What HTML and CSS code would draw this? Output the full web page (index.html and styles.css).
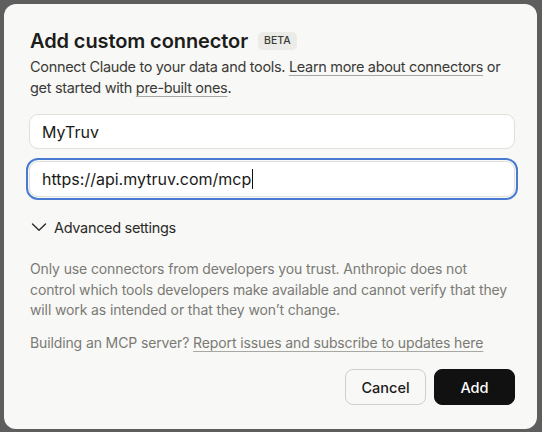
FILE: index.html
```html
<!DOCTYPE html>
<html>
<head>
<meta charset="utf-8">
<link rel="stylesheet" href="styles.css">
</head>
<body>
<div class="modal">
  <div class="head">
    <h1 class="title">Add custom connector</h1>
    <span class="badge">BETA</span>
  </div>
  <p class="desc"><span>Connect Claude to your data and tools.</span> <a class="link">Learn more about connectors</a> <span>or</span> <span>get started with</span> <a class="link">pre-built ones</a>.</p>
  <div class="fields">
    <div class="input">MyTruv</div>
    <div class="input focus">https://api.mytruv.com/mcp<span class="caret"></span></div>
  </div>
  <div class="adv">
    <svg class="chev" width="16" height="10" viewBox="0 0 16 10"><path d="M1.5 2 L8 8.2 L14.5 2" fill="none" stroke="#2a2a28" stroke-width="1.4" stroke-linecap="round" stroke-linejoin="round"/></svg>
    <span>Advanced settings</span>
  </div>
  <p class="note">Only use connectors from developers you trust. Anthropic does not control which tools developers make available and cannot verify that they will work as intended or that they won’t change.</p>
  <p class="note build">Building an MCP server? <a class="link">Report issues and subscribe to updates here</a></p>
  <div class="actions">
    <button class="btn cancel">Cancel</button>
    <button class="btn add">Add</button>
  </div>
</div>
</body>
</html>
```
FILE: styles.css
```css
html, body {
  margin: 0;
  height: 100%;
}
body {
  background: #5e5e5e;
  box-sizing: border-box;
  padding: 4px 5px 3px 4px;
  display: flex;
  font-family: Inter, "Open Sans", sans-serif;
}
.modal {
  flex: 1;
  background: #f8f8f6;
  border-radius: 12px;
  padding: 22px 22px 0 25px;
  display: flex;
  flex-direction: column;
  color: #1c1c1a;
}
.head {
  display: flex;
  align-items: center;
  gap: 10px;
  height: 30px;
}
.title {
  margin: 0 0 0 1px;
  font-size: 20px;
  font-weight: 600;
  letter-spacing: -0.1px;
  line-height: 30px;
}
.badge {
  background: #ebebe7;
  border-radius: 5px;
  font-size: 10.5px;
  font-weight: 500;
  color: #3a3a38;
  padding: 3px 6px;
  line-height: 12px;
}
.desc {
  margin: 1px 0 0 1px;
  font-size: 14.5px;
  line-height: 20.5px;
  letter-spacing: -0.32px;
  color: #3a3a37;
}
.link {
  text-decoration: underline;
  text-decoration-color: #a8a8a3;
  text-underline-offset: 3px;
  text-decoration-thickness: 1px;
}
.fields {
  margin-top: 16px;
  display: flex;
  flex-direction: column;
  gap: 12px;
}
.input {
  height: 35px;
  box-sizing: border-box;
  background: #ffffff;
  border: 1px solid #dfdfdb;
  border-radius: 9px;
  padding: 0 12px;
  display: flex;
  align-items: center;
  font-size: 16px;
  color: #1a1a18;
}
.input.focus {
  height: 36px;
  outline: 2px solid #4a7bd3;
  outline-offset: 1px;
}
.caret {
  display: inline-block;
  width: 1px;
  height: 20px;
  margin-left: 1px;
  background: #111;
}
.adv {
  margin-top: 19px;
  display: flex;
  align-items: center;
  gap: 7px;
  font-size: 14.5px;
  letter-spacing: -0.32px;
  color: #2a2a28;
  height: 22px;
  padding-left: 2px;
}
.note {
  margin: 21px 0 0 1px;
  font-size: 14px;
  line-height: 20.5px;
  letter-spacing: -0.12px;
  color: #7a7a75;
}
.note.build {
  margin-top: 12px;
}
.note.build .link {
  color: #7a7a75;
}
.actions {
  margin-top: 16px;
  display: flex;
  justify-content: flex-end;
  gap: 8px;
}
.btn {
  height: 36px;
  box-sizing: border-box;
  border-radius: 8px;
  font-family: inherit;
  font-size: 14.5px;
  font-weight: 500;
  width: 81px;
}
.cancel {
  background: #f8f8f6;
  border: 1px solid #cfcfcb;
  color: #1a1a18;
}
.add {
  background: #111111;
  border: 1px solid #111111;
  color: #ffffff;
}
```
